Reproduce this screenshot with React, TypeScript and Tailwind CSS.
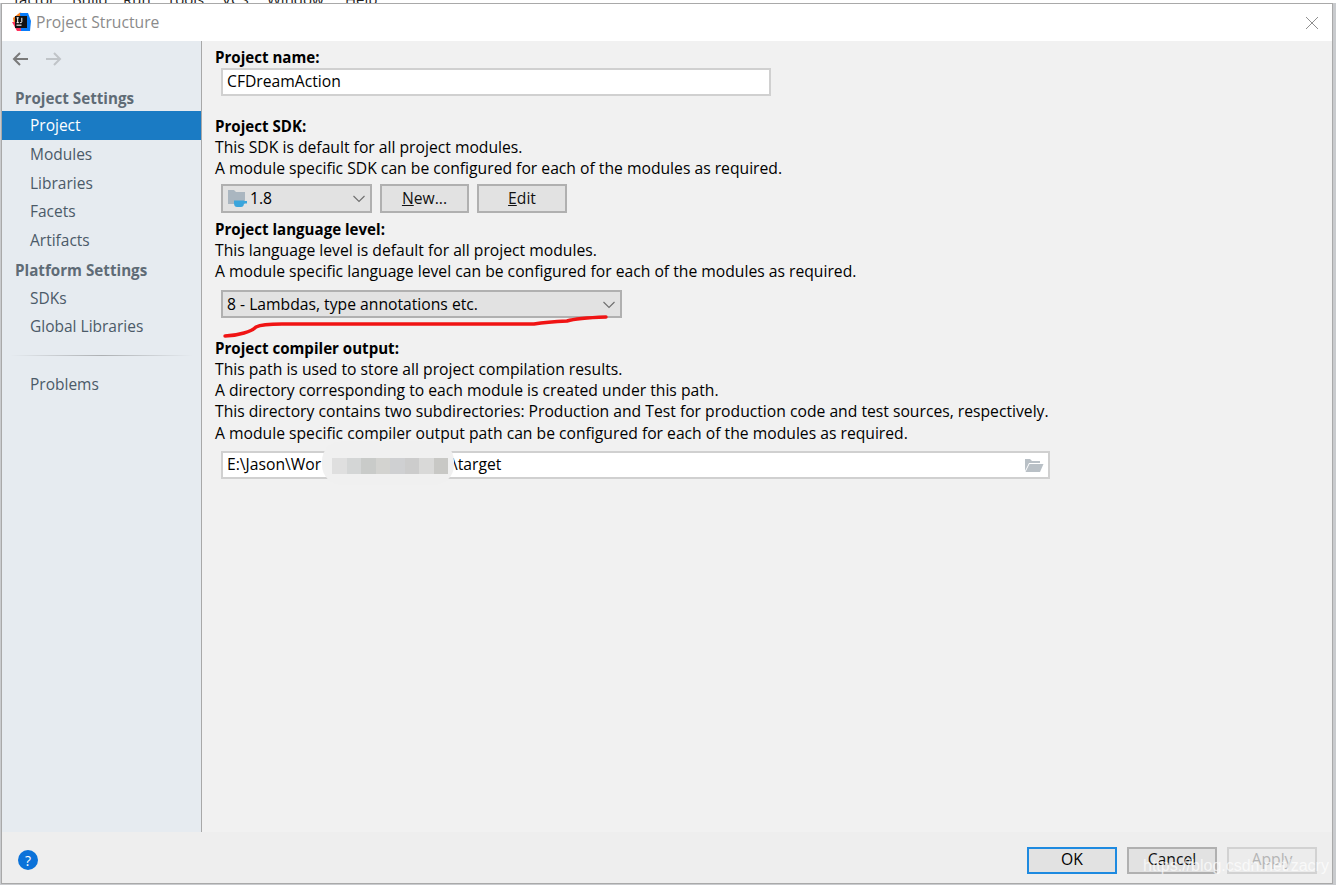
import React from "react";

const font = { fontFamily: '"Open Sans","Noto Sans",sans-serif' };
const patchCells = ["bg-[#dfdfdf]", "bg-[#d4d6d6]", "bg-[#c9cbc9]", "bg-[#d3d3d0]", "bg-[#cfd0d2]", "bg-[#cccccc]", "bg-[#d9d9d8]", "bg-[#c8c8c5]"];

function Chevron() {
  return (
    <svg width="14" height="8" viewBox="0 0 14 8" fill="none">
      <path d="M1.5 1 L7 6.5 L12.5 1" stroke="#6e6e6e" strokeWidth="1.1" />
    </svg>
  );
}

function Logo() {
  return (
    <svg width="20" height="20" viewBox="0 0 20 20">
      <path d="M2 6 L9 0.5 L14 2 L10 9 L3 12 Z" fill="#fc801d" />
      <path d="M1 10 L6 19 L12 19 L13 10 Z" fill="#fe315d" />
      <path d="M9 1 L17 1 L20 9 L19 19 L10 19 Z" fill="#087cfa" />
      <rect x="4" y="4" width="12" height="12" fill="#111" />
      <rect x="5.5" y="12.6" width="5" height="1.1" fill="#fff" />
      <path d="M5.6 5.8 H7.8 M6.7 5.8 V10.6 M5.6 10.6 H7.8 M10.8 5.8 V9.6 Q10.8 10.6 9.9 10.6 H8.9" stroke="#fff" strokeWidth="1" fill="none" />
    </svg>
  );
}

function NavArrow({ dir, color }: { dir: "l" | "r"; color: string }) {
  return (
    <svg width="17" height="14" viewBox="0 0 17 14" fill="none">
      {dir === "l" ? (
        <path d="M16 7 H2 M8 1 L2 7 L8 13" stroke={color} strokeWidth="2" />
      ) : (
        <path d="M1 7 H15 M9 1 L15 7 L9 13" stroke={color} strokeWidth="2" />
      )}
    </svg>
  );
}

function SdkIcon() {
  return (
    <svg width="20" height="19" viewBox="0 0 20 19">
      <path d="M0 1 H6 L8 3 H17 V15 H0 Z" fill="#aab6c0" />
      <path d="M6 11.5 H16 V14 Q16 18 13 18 H9 Q6 18 6 14 Z" fill="#3aa5dc" />
      <path d="M16 12 H19 V14.5 H15.5 Z" fill="#3aa5dc" />
    </svg>
  );
}

function NavItem({ label, active, className }: { label: string; active?: boolean; className: string }) {
  return (
    <div className={`flex items-center pl-[28px] text-[15.5px] ${className} ${active ? "bg-[#1a7bc4] text-white" : "text-[#4b5a68]"}`}>
      {label}
    </div>
  );
}

function Heading({ label, className = "" }: { label: string; className?: string }) {
  return <div className={`h-[21px] text-[15.1px] leading-[21px] font-bold text-black ${className}`}>{label}</div>;
}

function Line({ children }: { children: React.ReactNode }) {
  return <div className="h-[21px] text-[15.7px] leading-[21px] whitespace-nowrap text-black">{children}</div>;
}

function ActionButton({ children, className = "" }: { children: React.ReactNode; className?: string }) {
  return (
    <div className={`flex items-center justify-center border-2 border-[#b0b0b0] bg-[#e2e2e2] text-[15.7px] text-[#111] ${className}`}>
      {children}
    </div>
  );
}

export default function App() {
  return (
    <div style={font} className="relative flex h-[885px] w-[1336px] flex-col overflow-hidden bg-[#c9cbce] text-[15.7px]">
      {/* window behind the dialog */}
      <div className="flex h-[3px] items-end overflow-hidden bg-white pl-[14px] text-[15px] leading-[14px] text-[#222]">
        <span className="w-[58px] translate-y-[3px]">factor</span>
        <span className="w-[51px] translate-y-[3px]">Build</span>
        <span className="w-[44px] translate-y-[3px]">Run</span>
        <span className="w-[55px] translate-y-[3px]">Tools</span>
        <span className="w-[45px] translate-y-[3px]">VCS</span>
        <span className="w-[78px] translate-y-[3px]">Window</span>
        <span className="translate-y-[3px]">Help</span>
      </div>

      {/* dialog */}
      <div className="ml-[1px] mr-[3px] flex h-[881px] flex-col border border-[#a9a9a9] bg-[#f1f1f1]">
        <div className="flex h-[37px] items-center justify-between bg-white pl-[9px] pr-[13px]">
          <div className="flex items-center gap-[5px]">
            <Logo />
            <span className="text-[15.7px] text-[#8b8b8b]">Project Structure</span>
          </div>
          <svg width="14" height="14" viewBox="0 0 14 14" fill="none">
            <path d="M1 1 L13 13 M13 1 L1 13" stroke="#8f8f8f" strokeWidth="1" />
          </svg>
        </div>

        <div className="flex min-h-0 flex-1">
          {/* sidebar */}
          <div className="flex w-[200px] shrink-0 flex-col border-r border-[#a8a8a8] bg-[#e6ebf0]">
            <div className="flex h-[44px] items-start gap-[16px] pl-[10px] pt-[11px]">
              <NavArrow dir="l" color="#7a7a7a" />
              <NavArrow dir="r" color="#c0c4c8" />
            </div>
            <div className="flex h-[26px] items-center pl-[13px] text-[15.2px] font-bold text-[#5f6b76]">Project Settings</div>
            <NavItem label="Project" active className="h-[29px]" />
            <NavItem label="Modules" className="h-[29px]" />
            <NavItem label="Libraries" className="h-[29px]" />
            <NavItem label="Facets" className="h-[28px]" />
            <NavItem label="Artifacts" className="h-[29px]" />
            <div className="flex h-[29px] items-center pl-[13px] pt-[2px] text-[15.2px] font-bold text-[#5f6b76]">Platform Settings</div>
            <NavItem label="SDKs" className="h-[28px] pt-[2px]" />
            <NavItem label="Global Libraries" className="h-[29px]" />
            <div className="mx-[8px] mt-[14px] h-px bg-gradient-to-r from-transparent via-[#adb0b3] to-transparent" />
            <NavItem label="Problems" className="mt-[14px] h-[29px]" />
          </div>

          {/* content */}
          <div className="relative min-w-0 flex-1 pl-[13px] pt-[6px]">
            <Heading label="Project name:" />
            <div className="ml-[6px] flex h-[28px] w-[550px] items-center border-2 border-[#d0d0d0] bg-white pb-px pl-[4px] text-black">
              CFDreamAction
            </div>

            <Heading label="Project SDK:" className="mt-[20px]" />
            <Line>This SDK is default for all project modules.</Line>
            <Line>A module specific SDK can be configured for each of the modules as required.</Line>
            <div className="ml-[6px] mt-[5px] flex h-[29px] gap-[8px]">
              <div className="flex w-[151px] items-center border-2 border-[#b0b0b0] bg-[#e2e2e2] pl-[5px] pr-[4px] text-black">
                <SdkIcon />
                <span className="ml-[2px] flex-1">1.8</span>
                <Chevron />
              </div>
              <ActionButton className="w-[89px]">
                <span><span className="underline">N</span>ew...</span>
              </ActionButton>
              <ActionButton className="w-[90px]">
                <span><span className="underline">E</span>dit</span>
              </ActionButton>
            </div>

            <Heading label="Project language level:" className="mt-[6px]" />
            <Line>This language level is default for all project modules.</Line>
            <Line>A module specific language level can be configured for each of the modules as required.</Line>
            <div className="ml-[6px] mt-[8px] flex h-[28px] w-[401px] items-center justify-between border-2 border-[#b0b0b0] bg-[#e2e2e2] pl-[4px] pr-[4px] pt-[2px] text-black">
              <span>8 - Lambdas, type annotations etc.</span>
              <Chevron />
            </div>

            <Heading label="Project compiler output:" className="mt-[20px]" />
            <Line>This path is used to store all project compilation results.</Line>
            <Line>A directory corresponding to each module is created under this path.</Line>
            <Line>This directory contains two subdirectories: Production and Test for production code and test sources, respectively.</Line>
            <div className="mt-px">
              <Line>A module specific compiler output path can be configured for each of the modules as required.</Line>
            </div>
            <div className="relative ml-[6px] mt-[7px] flex h-[28px] w-[829px] items-center border-2 border-[#d0d0d0] bg-white pb-px pl-[4px] pr-[4px] text-black">
              <span className="w-[225px] shrink-0 whitespace-nowrap">E:\Jason\Wor</span>
              <span className="flex-1">\target</span>
              <svg width="20" height="16" viewBox="0 0 20 16">
                <path d="M1 2 H6 L8 4 H16 V6 H5 L1 14 Z" fill="#b9c0c6" />
                <path d="M5.5 7 H19.5 L16 15 H1.5 Z" fill="#b9c0c6" />
              </svg>
            </div>

            {/* scribble over the path */}
            <div className="absolute left-[120px] top-[400px] h-[44px] w-[132px] rounded-[20px] bg-[#f0f0f0] pl-[10px] pr-[6px] pt-[17px]">
              <div className="flex h-[16px]">
                {patchCells.map((c, i) => (
                  <div key={i} className={`flex-1 ${c}`} />
                ))}
              </div>
            </div>

            {/* red pen mark */}
            <svg className="absolute left-[20px] top-[270px]" width="390" height="30" viewBox="0 0 390 30" fill="none">
              <path
                d="M3 25 Q12 25 22 22 Q30 20 34 16 Q40 13 60 13 L312 13 Q325 11 345 10 Q355 7 384 6"
                stroke="#f01414"
                strokeWidth="3.4"
                strokeLinecap="round"
              />
            </svg>
          </div>
        </div>

        {/* footer */}
        <div className="flex h-[51px] shrink-0 items-center justify-between bg-[#eeeeee] pl-[16px] pr-[15px] pt-[5px]">
          <div className="flex h-[20px] w-[20px] items-center justify-center rounded-full bg-[#0b72d9] text-[14px] text-white">?</div>
          <div className="flex gap-[10px]">
            <ActionButton className="h-[27px] w-[90px] !border-[#1e8ae0] !text-black">OK</ActionButton>
            <ActionButton className="h-[27px] w-[90px]">Cancel</ActionButton>
            <ActionButton className="h-[27px] w-[90px] !border-[#d2d2d2] !bg-[#ececec] !text-[#b5b5b5]">Apply</ActionButton>
          </div>
        </div>
      </div>

      {/* watermark */}
      <div className="absolute left-[1143px] top-[856px] text-[16px] leading-[20px] text-white/70" style={{ fontFamily: '"Liberation Sans",sans-serif' }}>
        https://blog.csdn.net/zacry
      </div>
    </div>
  );
}
